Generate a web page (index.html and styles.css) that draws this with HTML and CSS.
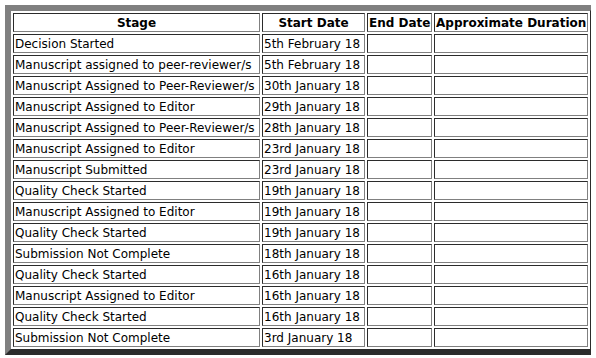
FILE: index.html
```html
<!DOCTYPE html>
<html>
<head>
<meta charset="utf-8">
<link rel="stylesheet" href="styles.css">
</head>
<body>
<table class="history">
<colgroup>
<col class="c-stage"><col class="c-start"><col class="c-end"><col class="c-dur">
</colgroup>
<thead>
<tr><th>Stage</th><th>Start Date</th><th>End Date</th><th>Approximate Duration</th></tr>
</thead>
<tbody>
<tr><td>Decision Started</td><td>5th February 18</td><td></td><td></td></tr>
<tr><td>Manuscript assigned to peer-reviewer/s</td><td>5th February 18</td><td></td><td></td></tr>
<tr><td>Manuscript Assigned to Peer-Reviewer/s</td><td>30th January 18</td><td></td><td></td></tr>
<tr><td>Manuscript Assigned to Editor</td><td>29th January 18</td><td></td><td></td></tr>
<tr><td>Manuscript Assigned to Peer-Reviewer/s</td><td>28th January 18</td><td></td><td></td></tr>
<tr><td>Manuscript Assigned to Editor</td><td>23rd January 18</td><td></td><td></td></tr>
<tr><td>Manuscript Submitted</td><td>23rd January 18</td><td></td><td></td></tr>
<tr><td>Quality Check Started</td><td>19th January 18</td><td></td><td></td></tr>
<tr><td>Manuscript Assigned to Editor</td><td>19th January 18</td><td></td><td></td></tr>
<tr><td>Quality Check Started</td><td>19th January 18</td><td></td><td></td></tr>
<tr><td>Submission Not Complete</td><td>18th January 18</td><td></td><td></td></tr>
<tr><td>Quality Check Started</td><td>16th January 18</td><td></td><td></td></tr>
<tr><td>Manuscript Assigned to Editor</td><td>16th January 18</td><td></td><td></td></tr>
<tr><td>Quality Check Started</td><td>16th January 18</td><td></td><td></td></tr>
<tr><td>Submission Not Complete</td><td>3rd January 18</td><td></td><td></td></tr>
</tbody>
</table>
</body>
</html>
```
FILE: styles.css
```css
html, body {
  background: #ffffff;
}
body {
  margin: 5px;
  font-family: "DejaVu Sans", Verdana, sans-serif;
  font-size: 12px;
  color: #000000;
}
.history {
  table-layout: fixed;
  width: 591px;
  border-collapse: separate;
  border-spacing: 2px;
  border-style: solid;
  border-width: 6px;
  border-color: #808080 #2b2b2b #2b2b2b #808080;
}
.c-stage { width: 247px; }
.c-start { width: 103px; }
.c-end { width: 65px; }
.c-dur { width: 154px; }
.history th,
.history td {
  height: 15px;
  line-height: 15px;
  padding: 2px 1px 0 1px;
  border-style: solid;
  border-width: 1px;
  border-color: #2b2b2b #808080 #808080 #2b2b2b;
  white-space: nowrap;
  overflow: hidden;
  vertical-align: middle;
}
.history th {
  font-weight: bold;
  text-align: center;
}
.history td {
  text-align: left;
}
```
